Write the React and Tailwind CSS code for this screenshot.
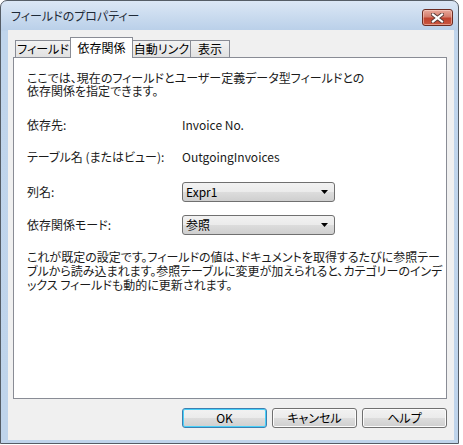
import React from 'react';

const font = "font-['Noto_Sans_CJK_JP',sans-serif] [font-feature-settings:'palt']";

const btnFace =
  'bg-[linear-gradient(to_bottom,#f2f2f2_0%,#ebebeb_50%,#dddddd_50%,#cfcfcf_100%)]';

const Combo = ({ value }) => (
  <div className={`w-[153px] h-[20px] rounded-[3px] border border-[#707070] ${btnFace} flex items-center justify-between pl-[3px] pr-[6px]`}>
    <span className="text-[12px] leading-none text-black">{value}</span>
    <svg width="7" height="4" viewBox="0 0 7 4">
      <path d="M0 0h7L3.5 4z" fill="#000" />
    </svg>
  </div>
);

const Button = ({ children, primary }) => (
  <div
    className={`w-[85px] h-[20px] rounded-[3px] border flex items-center justify-center text-[12px] text-black ${btnFace} ${
      primary ? 'border-[#3c7fb1] shadow-[inset_0_0_0_1px_#48d0f9]' : 'border-[#707070] shadow-[inset_0_0_0_1px_#fcfcfc]'
    }`}
  >
    {children}
  </div>
);

const Row = ({ label, children, className = '' }) => (
  <div className={`flex items-center h-[20px] ${className}`}>
    <div className="w-[155px] text-[12px] text-[#1a1a1a]">{label}</div>
    <div className="text-[12px] text-[#1a1a1a]">{children}</div>
  </div>
);

export default function App() {
  return (
    <div className={`w-[463px] h-[445px] bg-white ${font}`}>
      <div className="w-[459px] h-[444px] border border-[#555d66] rounded-t-[7px] flex flex-col bg-[linear-gradient(to_bottom,#dbe7f5_0px,#bad0e9_29px,#c0d5ec_30px,#bfd4eb_100%)]">
        {/* title bar */}
        <div className="h-[29px] relative flex items-center pl-[10px]">
          <span className="text-[12px] text-[#1e2a38]">フィールドのプロパティー</span>
          <div className="absolute right-[5px] top-[8px] w-[31px] h-[17px] rounded-[3px] border border-[#6b2c22] bg-[linear-gradient(to_bottom,#e9a99b_0%,#d47d6d_45%,#c0432f_55%,#c9563f_100%)] flex items-center justify-center shadow-[inset_0_0_0_1px_rgba(255,220,210,0.5)]">
            <svg width="13" height="10" viewBox="0 0 13 10">
              <path d="M2 1.5l9 7M11 1.5l-9 7" stroke="#5a3a36" strokeWidth="4" strokeLinecap="square" />
              <path d="M2 1.5l9 7M11 1.5l-9 7" stroke="#ffffff" strokeWidth="2.2" strokeLinecap="square" />
            </svg>
          </div>
        </div>

        {/* client area */}
        <div className="flex-1 ml-[7px] mr-[4px] mb-[3px] bg-[#f0f0f0] pt-[7px] pl-[5px] pr-[7px]">
          {/* tabs */}
          <div className="h-[20px] flex items-end text-[12px] text-black">
            <div className="ml-[2px] w-[55px] h-[17px] border-t border-l border-[#898c95] bg-[linear-gradient(to_bottom,#f3f3f3,#e1e1e1)] flex items-center justify-center">
              フィールド
            </div>
            <div className="relative z-10 w-[63px] h-[21px] mb-[-1px] border border-b-0 border-[#898c95] bg-white flex items-start justify-center pt-[1px]">
              依存関係
            </div>
            <div className="w-[57px] h-[17px] border-t border-[#898c95] bg-[linear-gradient(to_bottom,#f3f3f3,#e1e1e1)] flex items-center justify-center">
              自動リンク
            </div>
            <div className="w-[40px] h-[17px] border-t border-l border-r border-[#898c95] bg-[linear-gradient(to_bottom,#f3f3f3,#e1e1e1)] flex items-center justify-center">
              表示
            </div>
          </div>

          {/* panel */}
          <div className="h-[342px] border border-[#898c95] bg-white pl-[13px] pt-[13px]">
            <p className="text-[12px] leading-[13px] text-[#1a1a1a] whitespace-nowrap">
              ここでは、現在のフィールドとユーザー定義データ型フィールドとの
              <br />
              依存関係を指定できます。
            </p>

            <Row label="依存先:" className="mt-[18px]">Invoice No.</Row>
            <Row label="テーブル名 (またはビュー):" className="mt-[12px]">OutgoingInvoices</Row>
            <Row label="列名:" className="mt-[15px]">
              <Combo value="Expr1" />
            </Row>
            <Row label="依存関係モード:" className="mt-[13px]">
              <Combo value="参照" />
            </Row>

            <p className="mt-[15px] text-[12px] leading-[14px] text-[#1a1a1a] whitespace-nowrap">
              これが既定の設定です。フィールドの値は、ドキュメントを取得するたびに参照テー
              <br />
              ブルから読み込まれます。参照テーブルに変更が加えられると、カテゴリーのインデ
              <br />
              ックス フィールドも動的に更新されます。
            </p>
          </div>

          {/* buttons */}
          <div className="mt-[9px] flex justify-end gap-[5px]">
            <Button primary>OK</Button>
            <Button>キャンセル</Button>
            <Button>ヘルプ</Button>
          </div>
        </div>
      </div>
    </div>
  );
}
